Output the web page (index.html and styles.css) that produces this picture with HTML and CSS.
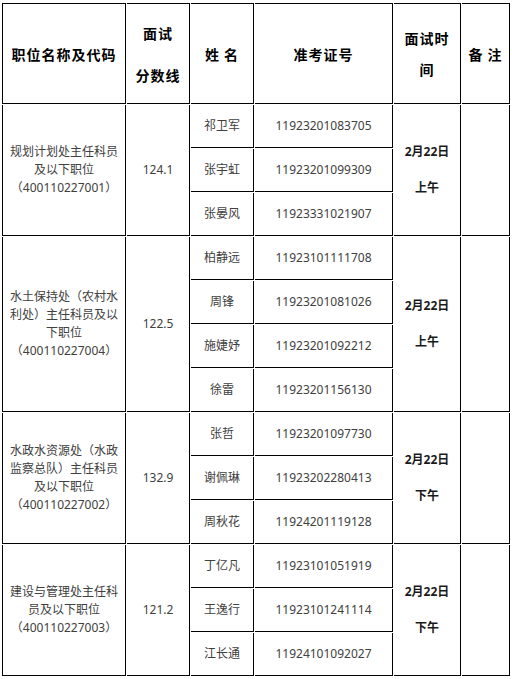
FILE: index.html
```html
<!DOCTYPE html>
<html lang="zh">
<head>
<meta charset="utf-8">
<title>面试名单</title>
<link rel="stylesheet" href="styles.css">
</head>
<body>
<table class="grid">
  <thead>
    <tr class="head">
      <th class="c1 first">职位名称及代码</th>
      <th class="c2"><div class="two">面试<br>分数线</div></th>
      <th class="c3">姓 名</th>
      <th class="c4">准考证号</th>
      <th class="c5"><div class="time">面试时<br>间</div></th>
      <th class="c6">备 注</th>
    </tr>
  </thead>
  <tbody>
    <tr>
      <td class="pos first" rowspan="3">规划计划处主任科员<br>及以下职位<br>（400110227001）</td>
      <td class="score" rowspan="3">124.1</td>
      <td class="name">祁卫军</td>
      <td class="id">11923201083705</td>
      <td class="date" rowspan="3">2月22日<br><br>上午</td>
      <td class="note" rowspan="3"></td>
    </tr>
    <tr><td class="name">张宇虹</td><td class="id">11923201099309</td></tr>
    <tr><td class="name">张晏风</td><td class="id">11923331021907</td></tr>

    <tr>
      <td class="pos first" rowspan="4">水土保持处（农村水<br>利处）主任科员及以<br>下职位<br>（400110227004）</td>
      <td class="score" rowspan="4">122.5</td>
      <td class="name">柏静远</td>
      <td class="id">11923101111708</td>
      <td class="date" rowspan="4">2月22日<br><br>上午</td>
      <td class="note" rowspan="4"></td>
    </tr>
    <tr><td class="name">周锋</td><td class="id">11923201081026</td></tr>
    <tr><td class="name">施婕妤</td><td class="id">11923201092212</td></tr>
    <tr><td class="name">徐雷</td><td class="id">11923201156130</td></tr>

    <tr>
      <td class="pos first" rowspan="3">水政水资源处（水政<br>监察总队）主任科员<br>及以下职位<br>（400110227002）</td>
      <td class="score" rowspan="3">132.9</td>
      <td class="name">张哲</td>
      <td class="id">11923201097730</td>
      <td class="date" rowspan="3">2月22日<br><br>下午</td>
      <td class="note" rowspan="3"></td>
    </tr>
    <tr><td class="name">谢佩琳</td><td class="id">11923202280413</td></tr>
    <tr><td class="name">周秋花</td><td class="id">11924201119128</td></tr>

    <tr>
      <td class="pos first" rowspan="3">建设与管理处主任科<br>员及以下职位<br>（400110227003）</td>
      <td class="score" rowspan="3">121.2</td>
      <td class="name">丁亿凡</td>
      <td class="id">11923101051919</td>
      <td class="date" rowspan="3">2月22日<br><br>下午</td>
      <td class="note" rowspan="3"></td>
    </tr>
    <tr><td class="name">王逸行</td><td class="id">11923101241114</td></tr>
    <tr><td class="name">江长通</td><td class="id">11924101092027</td></tr>
  </tbody>
</table>
</body>
</html>
```

FILE: styles.css
```css
html, body {
  margin: 0;
  padding: 0;
  background: #ffffff;
}

.grid {
  border-collapse: separate;
  border-spacing: 1px;
  table-layout: fixed;
  width: 510px;
  margin: 2px 0 0 1px;
  font-family: "Noto Sans", "Noto Sans CJK SC", sans-serif;
  font-size: 12px;
  color: #404040;
}

.grid th,
.grid td {
  box-sizing: border-box;
  padding: 0;
  text-align: center;
  vertical-align: middle;
  border-right: 1px solid #000;
  border-bottom: 1px solid #000;
}

.grid .first {
  border-left: 1px solid #000;
}

.grid th {
  border-top: 1px solid #000;
  height: 101px;
  font-family: "Noto Sans CJK SC", sans-serif;
  font-size: 14px;
  font-weight: bold;
  letter-spacing: 1px;
  color: #000;
  line-height: 20px;
}

.c1 { width: 124px; }
.c2 { width: 63px; }
.c3 { width: 63px; }
.c4 { width: 138px; }
.c5 { width: 67px; }
.c6 { width: 48px; }

.two {
  line-height: 42px;
}

.time {
  line-height: 31px;
}

.grid td {
  height: 43px;
  line-height: 18px;
}

.pos {
  line-height: 18px;
}

.date {
  font-weight: bold;
  color: #1a1a1a;
  line-height: 19px;
  padding-top: 4px;
}
```
